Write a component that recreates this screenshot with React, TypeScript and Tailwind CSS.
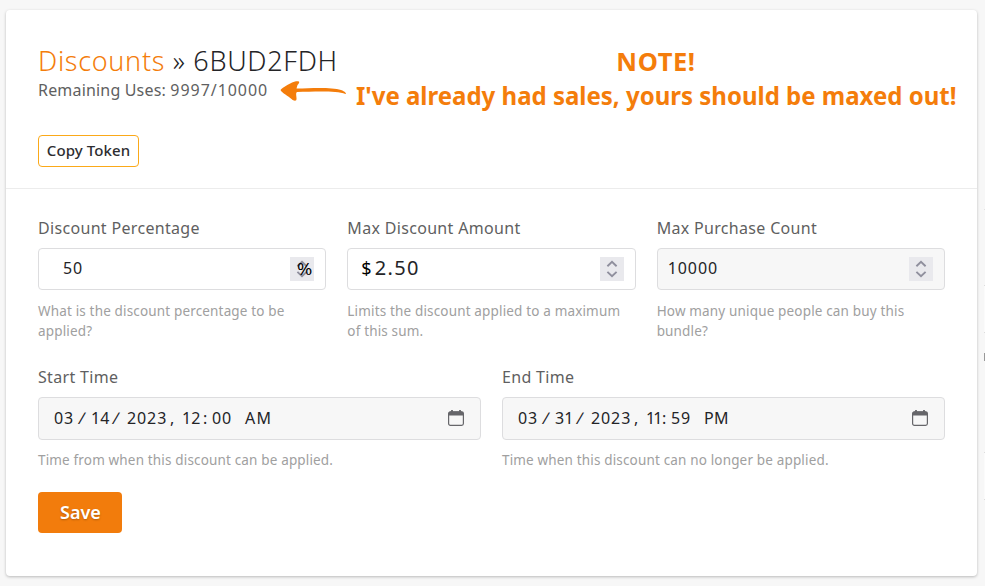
import clsx from "clsx";

function Stepper({ className }: { className?: string }) {
  return (
    <span
      className={clsx(
        "flex h-6 w-6 items-center justify-center bg-[#e9e9ed]",
        className
      )}
    >
      <svg width="24" height="24" viewBox="0 0 24 24" fill="none">
        <path
          d="M7.4 9.3L12 4.9L16.6 9.3M7.4 14.9L12 19.3L16.6 14.9"
          stroke="#8f8f9d"
          strokeWidth="1.9"
        />
      </svg>
    </span>
  );
}

function CalendarIcon() {
  return (
    <svg className="relative -top-px" width="16" height="16" viewBox="0 0 16 16" fill="none">
      <rect x="0.6" y="1.8" width="14.8" height="13.5" rx="1.8" stroke="#66666a" strokeWidth="1.2" />
      <path d="M0.6 3.2Q0.6 1.6 2.4 1.6H13.6Q15.4 1.6 15.4 3.2V5.6H0.6Z" fill="#66666a" />
      <path d="M4 0V3M12 0V3" stroke="#66666a" strokeWidth="1.8" />
    </svg>
  );
}

function Field({
  label,
  help,
  disabled,
  tall,
  children,
}: {
  label: string;
  help: string;
  disabled?: boolean;
  tall?: boolean;
  children: React.ReactNode;
}) {
  return (
    <div className="min-w-0 flex-1">
      <p className="h-6 text-base leading-6 tracking-[0.32px] text-[#5f5f61]">{label}</p>
      <div
        className={clsx(
          "mt-2 flex items-center rounded border border-[#dddddf] text-[#242427]",
          tall ? "h-[43px]" : "h-[42px]",
          disabled ? "bg-[#f7f7f7]" : "bg-white"
        )}
      >
        {children}
      </div>
      <p
        className={clsx(
          "pr-3 text-[13.5px] leading-5 tracking-[0.16px] text-[#a0a0a0]",
          tall ? "mt-[10px]" : "mt-[11px]"
        )}
      >
        {help}
      </p>
    </div>
  );
}

type DateParts = {
  month: string;
  day: string;
  year: string;
  hour: string;
  minute: string;
  period: string;
};

function DateValue({ value, tightHour }: { value: DateParts; tightHour?: boolean }) {
  return (
    <p className="flex flex-1 pb-0.5 pl-[15px] text-base leading-6">
      <span className="w-[25px] tracking-[0.9px]">{value.month}</span>
      <span className="w-[12px]">
        <span className="inline-block -skew-x-12">/</span>
      </span>
      <span className="w-[22px]">{value.day}</span>
      <span className="w-[14px]">
        <span className="inline-block -skew-x-12">/</span>
      </span>
      <span className="w-[43px] tracking-[0.9px]">{value.year}</span>
      <span className="w-[12px]">,</span>
      <span className={tightHour ? "w-[16px] tracking-[-2px]" : "w-[21px]"}>{value.hour}</span>
      <span className="w-[9px]">:</span>
      <span className="w-[33px] tracking-[0.9px]">{value.minute}</span>
      <span className={tightHour ? "tracking-[0.2px]" : "tracking-[1.2px]"}>{value.period}</span>
    </p>
  );
}

export default function App() {
  return (
    <main className="flex h-[586px] justify-between overflow-hidden bg-[#f7f7f7] pl-[6px] font-['Noto_Sans',sans-serif]">
      <section className="mt-[10px] h-[566px] w-[971px] rounded bg-white shadow-[0_1px_3px_rgba(0,0,0,0.25)]">
        <header className="relative h-[179px] border-b border-[#ececec] px-8 pt-[34px]">
          <h1 className="text-[27px] font-[350] leading-[34px] tracking-[0.68px] text-[#242427]">
            <span className="text-[#f47d0b]">Discounts</span> » 6BUD2FDH
          </h1>
          <p className="text-base leading-6 tracking-[0.18px] text-[#5f5f61]">
            Remaining Uses: <span className="tracking-[0.95px]">9997/10000</span>
          </p>
          <button className="mt-[33px] h-8 w-[101px] rounded border border-[#fba919] pb-0.5 text-[15px] font-medium tracking-[0.1px] text-[#2d2d30]">
            Copy Token
          </button>

          <svg
            className="absolute left-[274px] top-[70px]"
            width="68"
            height="22"
            viewBox="0 0 68 22"
            fill="#f47d0b"
          >
            <path d="M0.5 10C2 7.500 12 2 16 1.200C20 0.800 20 2 17.500 5L16.500 8.500C32 8 52 7 61 10C65 11.500 67 13.500 65.500 14C56 10.500 34 11.800 17 12C15.500 13 16.500 16 16.500 18C17 22 13.500 21 11.500 19C8.500 16 2 13 0.500 10Z" />
          </svg>
          <div className="absolute left-[350px] top-[34px] w-[600px] whitespace-nowrap text-center text-[25.5px] font-bold leading-[34px] text-[#f47d0b]">
            <p className="tracking-[0.6px]">NOTE!</p>
            <p className="origin-left scale-x-[0.941] text-left">
              I've already had sales, yours should be maxed out!
            </p>
          </div>
        </header>

        <form className="px-8 pt-[27px]">
          <div className="flex gap-[21px]">
            <Field label="Discount Percentage" help="What is the discount percentage to be applied?">
              <span className="flex-1 pb-0.5 pl-6 text-base tracking-[0.9px]">50</span>
              <span className="relative mr-[11px]">
                <Stepper />
                <span className="absolute left-[7px] top-0 origin-left scale-x-115 text-base leading-6 text-black">
                  %
                </span>
              </span>
            </Field>
            <Field label="Max Discount Amount" help="Limits the discount applied to a maximum of this sum.">
              <span className="pb-0.5 pl-[13px] text-lg text-black">$</span>
              <span className="flex-1 pb-0.5 pl-[3px] text-xl tracking-[1.4px]">2.50</span>
              <Stepper className="mr-[11px]" />
            </Field>
            <Field label="Max Purchase Count" help="How many unique people can buy this bundle?" disabled>
              <span className="flex-1 pb-0.5 pl-[10px] text-base tracking-[0.95px]">10000</span>
              <Stepper className="mr-[11px]" />
            </Field>
          </div>

          <div className="mt-6 flex gap-[21px]">
            <Field label="Start Time" help="Time from when this discount can be applied." disabled tall>
              <DateValue
                value={{ month: "03", day: "14", year: "2023", hour: "12", minute: "00", period: "AM" }}
              />
              <span className="mr-4">
                <CalendarIcon />
              </span>
            </Field>
            <Field label="End Time" help="Time when this discount can no longer be applied." disabled tall>
              <DateValue
                value={{ month: "03", day: "31", year: "2023", hour: "11", minute: "59", period: "PM" }}
                tightHour
              />
              <span className="mr-4">
                <CalendarIcon />
              </span>
            </Field>
          </div>

          <button
            type="button"
            className="mt-[22px] h-[41px] w-[84px] rounded bg-[#f27c0c] pb-px pl-px text-lg font-semibold text-white [text-shadow:0_1px_2px_rgba(0,0,0,0.25)]"
          >
            Save
          </button>
        </form>
      </section>

      {/* edge of the neighbouring panel */}
      <aside className="flex w-px flex-col pt-[209px]">
        <div className="h-px bg-[#e2e2e2]" />
        <div className="mt-[75px] h-12 border-y border-[#dddddd] bg-[#fbfbfb]" />
        <div className="mt-5 h-2 bg-[#999999]" />
        <div className="mt-[91px] h-12 border-y border-[#dddddd] bg-[#fbfbfb]" />
      </aside>
    </main>
  );
}
